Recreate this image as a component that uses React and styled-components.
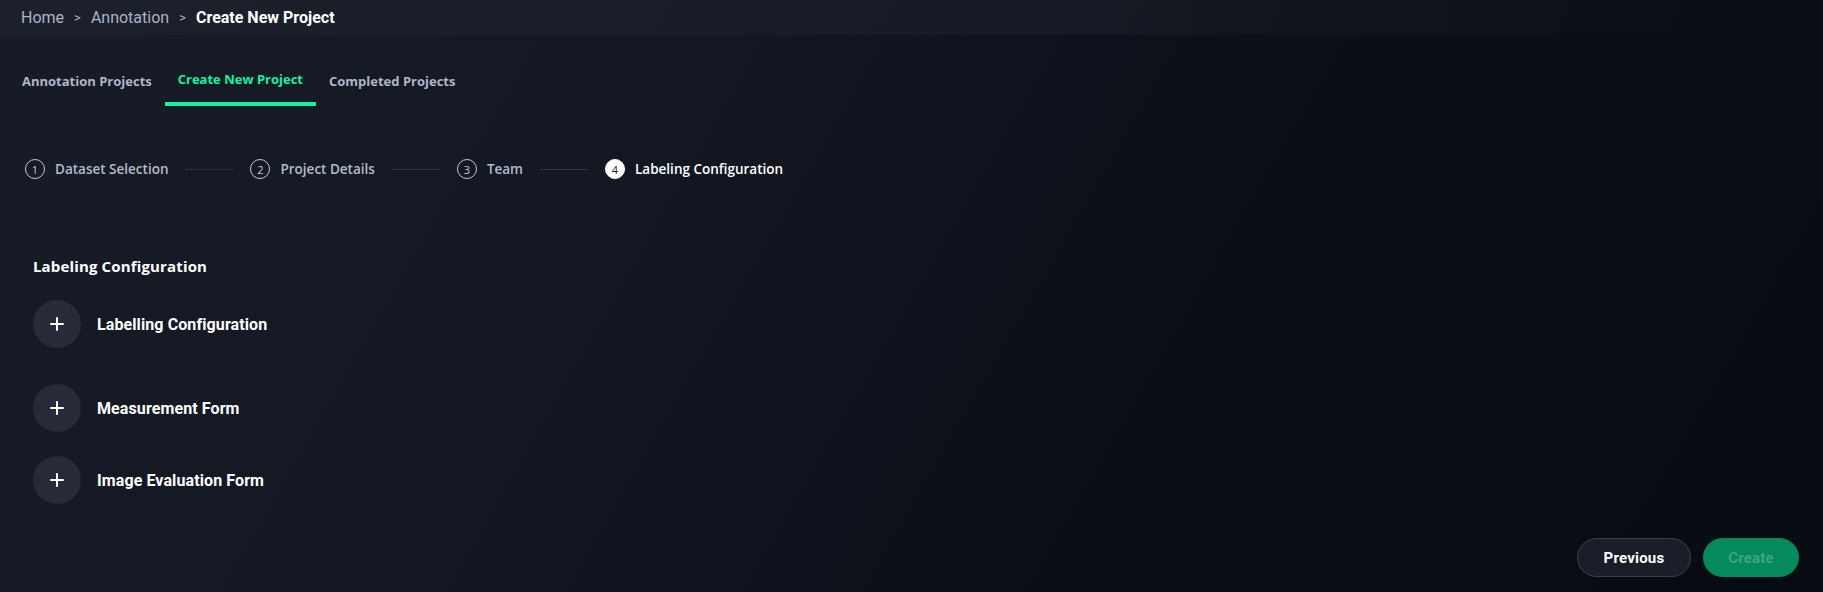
import React from "react";
import styled, { createGlobalStyle } from "styled-components";

const Global = createGlobalStyle`
  html, body { margin: 0; padding: 0; background: #0c1019; }
  * { box-sizing: border-box; }
`;

const Page = styled.div`
  min-height: 100vh;
  display: flex;
  flex-direction: column;
  background: linear-gradient(120deg, #171c27 0%, #121722 35%, #0b0f18 60%, #070b12 100%);
  font-family: "Open Sans", sans-serif;
`;

const Header = styled.header`
  height: 35px;
  display: flex;
  align-items: center;
  padding-left: 21px;
  gap: 10px;
  background: linear-gradient(90deg, rgba(255,255,255,0.02) 0%, rgba(255,255,255,0.03) 60%, rgba(255,255,255,0) 100%);
  font-family: Roboto, sans-serif;
  font-size: 16px;
`;

const Crumb = styled.span`
  color: ${(p) => (p.$current ? "#ffffff" : "#a9b3c6")};
  font-weight: ${(p) => (p.$current ? 700 : 400)};
`;

const Sep = styled.span`
  color: #a9b3c6;
  font-size: 13px;
`;

const Tabs = styled.nav`
  display: flex;
  padding-left: 9px;
  margin-top: 37px;
`;

const Tab = styled.div`
  padding: 0 13px 12px;
  font-size: 13px;
  font-weight: 700;
  line-height: 18px;
  color: ${(p) => (p.$active ? "#18f0a0" : "#aeb6c8")};
  border-bottom: 4px solid ${(p) => (p.$active ? "#18f0a0" : "transparent")};
  & > span { display: inline-block; transform: translateY(${(p) => (p.$active ? "-2px" : "0")}); }
`;

const Stepper = styled.div`
  display: flex;
  align-items: center;
  padding-left: 25px;
  margin-top: 53px;
  height: 20px;
`;

const Step = styled.div`
  display: flex;
  align-items: center;
  gap: 10px;
  font-size: 13.5px;
  font-weight: 600;
  color: ${(p) => (p.$active ? "#ffffff" : "#b3bccd")};
`;

const StepNum = styled.span`
  width: 20px;
  height: 20px;
  border-radius: 50%;
  display: flex;
  align-items: center;
  justify-content: center;
  font-size: 11px;
  font-weight: 400;
  border: 1px solid ${(p) => (p.$active ? "#ffffff" : "#c3cad6")};
  background: ${(p) => (p.$active ? "#ffffff" : "transparent")};
  color: ${(p) => (p.$active ? "#1b2233" : "#c3cad6")};
`;

const StepLine = styled.span`
  width: 48px;
  height: 1px;
  margin: 0 17px;
  background: #2e3441;
`;

const Section = styled.section`
  padding-left: 33px;
  margin-top: 77px;
`;

const SectionTitle = styled.h3`
  margin: 0 0 24px;
  font-size: 15px;
  font-weight: 700;
  line-height: 20px;
  letter-spacing: 0.15px;
  color: #ffffff;
`;

const Row = styled.div`
  display: flex;
  align-items: center;
  gap: 16px;
  margin-bottom: ${(p) => (p.$spaced ? "36px" : "24px")};
`;

const AddButton = styled.button`
  width: 48px;
  height: 48px;
  border-radius: 50%;
  border: none;
  background: #262b37;
  display: flex;
  align-items: center;
  justify-content: center;
  padding: 0;
  cursor: pointer;
`;

const RowLabel = styled.span`
  font-family: Roboto, sans-serif;
  font-size: 16px;
  font-weight: 700;
  letter-spacing: 0.1px;
  color: #ffffff;
`;

const Footer = styled.div`
  margin-top: auto;
  display: flex;
  justify-content: flex-end;
  gap: 12px;
  padding: 0 24px 15px;
`;

const Button = styled.button`
  height: 39px;
  width: ${(p) => p.$w}px;
  border-radius: 20px;
  font-family: Roboto, sans-serif;
  font-size: 15px;
  font-weight: 700;
  letter-spacing: 0.2px;
  cursor: pointer;
  border: 1px solid ${(p) => (p.$primary ? "#058a5d" : "#3a404d")};
  background: ${(p) => (p.$primary ? "#058a5d" : "#191e28")};
  color: ${(p) => (p.$primary ? "#3aa77d" : "#ffffff")};
`;

const Plus = () => (
  <svg width="14" height="14" viewBox="0 0 14 14">
    <path d="M7 1v12M1 7h12" stroke="#fff" strokeWidth="2" strokeLinecap="round" />
  </svg>
);

const steps = ["Dataset Selection", "Project Details", "Team", "Labeling Configuration"];
const rows = ["Labelling Configuration", "Measurement Form", "Image Evaluation Form"];

export default function App() {
  return (
    <Page>
      <Global />
      <Header>
        <Crumb>Home</Crumb>
        <Sep>&gt;</Sep>
        <Crumb>Annotation</Crumb>
        <Sep>&gt;</Sep>
        <Crumb $current>Create New Project</Crumb>
      </Header>
      <Tabs>
        <Tab><span>Annotation Projects</span></Tab>
        <Tab $active><span>Create New Project</span></Tab>
        <Tab><span>Completed Projects</span></Tab>
      </Tabs>
      <Stepper>
        {steps.map((s, i) => (
          <React.Fragment key={s}>
            {i > 0 && <StepLine />}
            <Step $active={i === 3}>
              <StepNum $active={i === 3}>{i + 1}</StepNum>
              {s}
            </Step>
          </React.Fragment>
        ))}
      </Stepper>
      <Section>
        <SectionTitle>Labeling Configuration</SectionTitle>
        {rows.map((r, i) => (
          <Row key={r} $spaced={i === 0}>
            <AddButton><Plus /></AddButton>
            <RowLabel>{r}</RowLabel>
          </Row>
        ))}
      </Section>
      <Footer>
        <Button $w={114}>Previous</Button>
        <Button $w={96} $primary>Create</Button>
      </Footer>
    </Page>
  );
}
